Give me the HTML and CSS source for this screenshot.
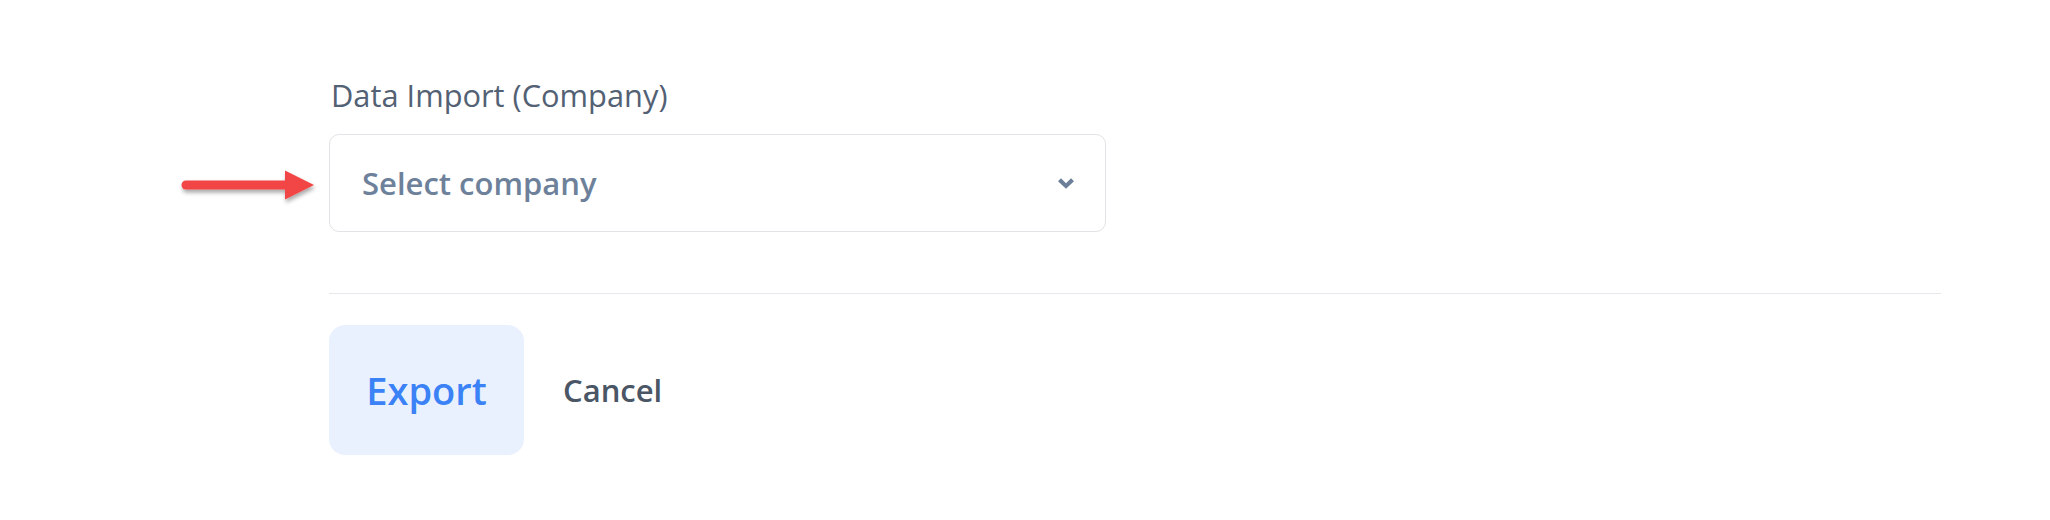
FILE: index.html
```html
<!DOCTYPE html>
<html lang="en">
<head>
<meta charset="utf-8">
<title>Data Import</title>
<link rel="stylesheet" href="styles.css">
</head>
<body>
<div class="form">
  <div class="field">
    <label class="field-label">Data Import (Company)</label>
    <div class="select">
      <svg class="pointer" width="136" height="34" viewBox="0 0 136 34" aria-hidden="true">
        <defs>
          <filter id="sh" x="-10%" y="-30%" width="120%" height="190%">
            <feDropShadow dx="1" dy="3" stdDeviation="2" flood-color="#000" flood-opacity="0.35"/>
          </filter>
        </defs>
        <g filter="url(#sh)">
          <line x1="6" y1="15" x2="108" y2="15" stroke="#f24444" stroke-width="9" stroke-linecap="round"/>
          <polygon points="105,0.5 134,15 105,29.5" fill="#f24444"/>
        </g>
      </svg>
      <span class="select-text">Select company</span>
      <svg class="chevron" width="16" height="11" viewBox="0 0 16 11" aria-hidden="true">
        <path d="M0 3.2 L3 0.3 L8 5.2 L13 0.3 L16 3.2 L8 10.8 Z" fill="#6b7f99"/>
      </svg>
    </div>
  </div>
  <hr class="divider">
  <div class="actions">
    <button class="btn btn-primary">Export</button>
    <button class="btn btn-link">Cancel</button>
  </div>
</div>
</body>
</html>
```

FILE: styles.css
```css
* { box-sizing: border-box; }
html, body { margin: 0; padding: 0; background: #ffffff; }
body { font-family: "Open Sans", "Noto Sans", sans-serif; }

.form {
  width: 1941px;
  padding: 74px 0 0 329px;
}

.field {
  display: flex;
  flex-direction: column;
}

.field-label {
  font-size: 30.8px;
  line-height: 42px;
  color: #536174;
  font-weight: 400;
  margin: 0 0 18px 2px;
}

.select {
  position: relative;
  width: 777px;
  height: 98px;
  border: 1px solid #e1e3e6;
  border-radius: 10px;
  display: flex;
  align-items: center;
  justify-content: space-between;
  padding: 0 31px 0 32px;
}

.select-text {
  font-size: 31px;
  font-weight: 600;
  color: #6e819a;
  line-height: 40px;
}

.chevron { display: block; margin-top: 1px; }

.pointer {
  position: absolute;
  left: -150px;
  top: 35px;
  overflow: visible;
}

.divider {
  border: 0;
  border-top: 1px solid #e5e7eb;
  margin: 61px 0 0 0;
  height: 0;
}

.actions {
  display: flex;
  align-items: center;
  gap: 39px;
  margin-top: 31px;
}

.btn {
  font-family: inherit;
  border: 0;
  background: none;
  padding: 0;
  cursor: pointer;
}

.btn-primary {
  width: 195px;
  height: 130px;
  border-radius: 16px;
  background: #eaf1fe;
  color: #3b82f6;
  font-size: 38px;
  font-weight: 600;
}

.btn-link {
  color: #4a5565;
  font-size: 31px;
  font-weight: 600;
}
```
